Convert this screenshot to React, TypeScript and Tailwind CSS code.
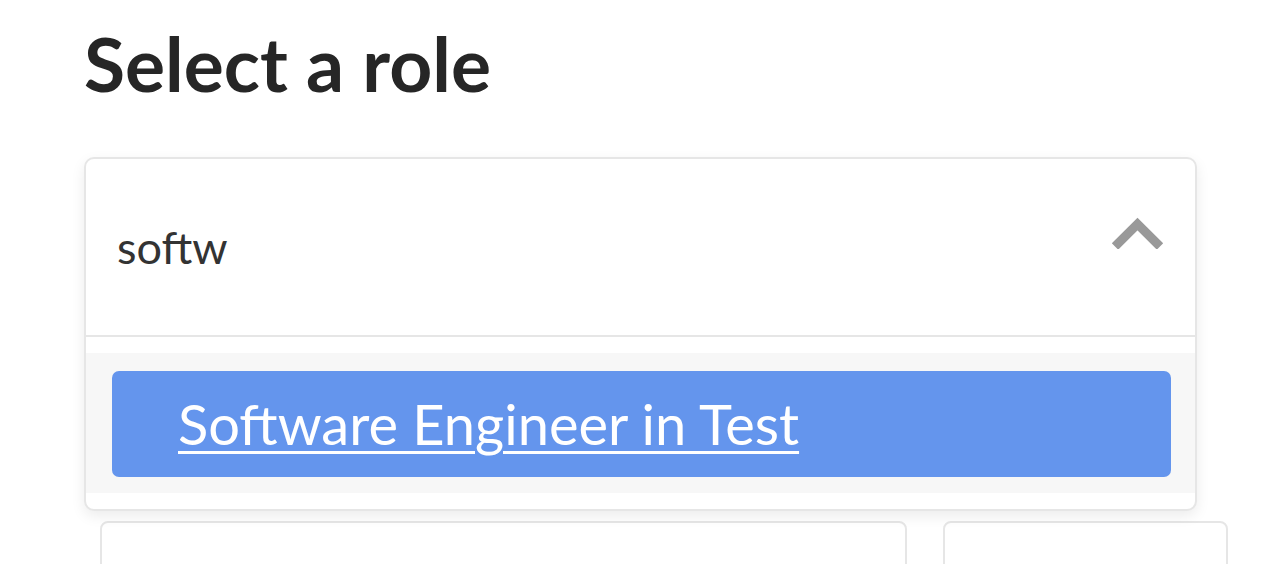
import React, { useState } from 'react';

const roles = ['Software Engineer in Test'];

const ChevronUp: React.FC = () => (
  <svg width="55" height="33" viewBox="0 0 55 33" className="mt-[57px] shrink-0">
    <polyline
      points="5,30.5 27.5,8 50,30.5"
      fill="none"
      stroke="#999999"
      strokeWidth="9"
      strokeLinejoin="miter"
    />
  </svg>
);

const App: React.FC = () => {
  const [query] = useState('softw');
  const matches = roles.filter((r) => r.toLowerCase().includes(query.toLowerCase()));

  return (
    <div className="h-[564px] overflow-hidden bg-white pl-[84px] pt-[26px] font-['Lato',sans-serif]">
      <h1 className="text-[75px] font-bold leading-none text-[#262626]">Select a role</h1>

      <div className="relative z-10 mt-[56px] w-[1113px] rounded-[10px] border-2 border-[#e6e6e6] bg-white shadow-[0_5px_14px_rgba(0,0,0,0.08)]">
        <div className="flex h-[176px] justify-between pl-[31px] pr-[30px]">
          <div className="flex items-center pt-[2px] text-[45px] text-[#333333]">{query}</div>
          <ChevronUp />
        </div>

        <div className="border-t-2 border-[#e6e6e6] pt-[16px] pb-[16px]">
          <ul className="bg-[#f7f7f7] pt-[18px] pb-[16px] pl-[26px] pr-[24px]">
            {matches.map((role) => (
              <li
                key={role}
                className="flex h-[106px] items-center rounded-[7px] bg-[#6495ed] pl-[66px] text-[56px] text-white underline decoration-[3px] underline-offset-[6px]"
              >
                {role}
              </li>
            ))}
          </ul>
        </div>
      </div>

      <div className="mt-[10px] ml-[16px] flex gap-[36px]">
        <div className="h-[120px] w-[807px] rounded-[8px] border-2 border-[#e6e6e6] bg-white" />
        <div className="h-[120px] w-[285px] rounded-[8px] border-2 border-[#e6e6e6] bg-white" />
      </div>
    </div>
  );
};

export default App;
